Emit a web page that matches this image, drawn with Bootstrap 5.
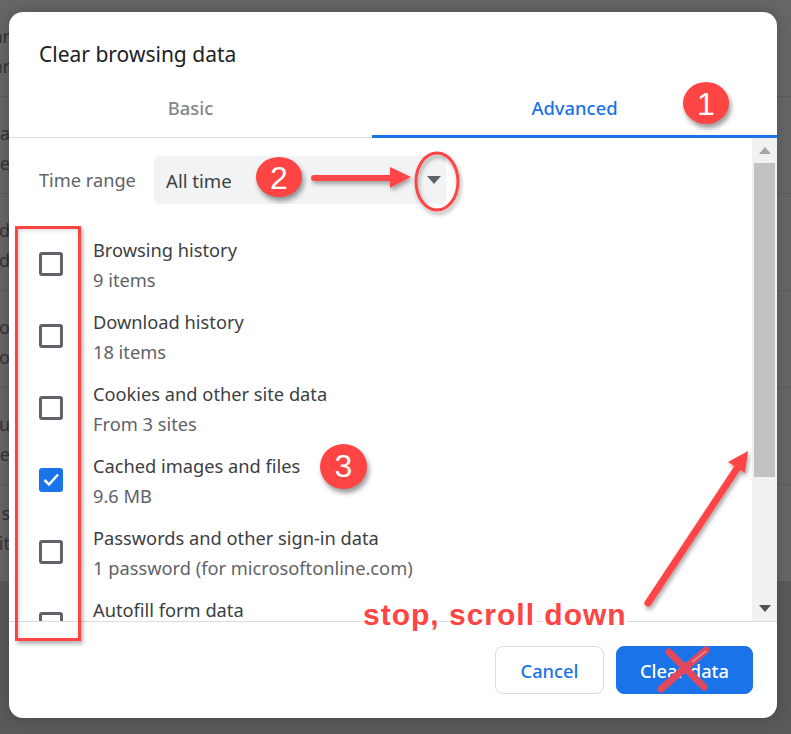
<!DOCTYPE html>
<html lang="en">
<head>
<meta charset="utf-8">
<title>Clear browsing data</title>
<link href="https://cdn.jsdelivr.net/npm/bootstrap@5.3.0/dist/css/bootstrap.min.css" rel="stylesheet">
<style>
html,body{height:734px;overflow:hidden}
body{background:#595959;font-family:"Noto Sans","Open Sans",sans-serif;color:#202124;position:relative}
.backdrop{position:absolute;left:0;top:0;width:791px;background:#666}
.bgrow{height:97px;border-bottom:1px solid #5c5c5c;padding-top:21px;font-size:18px;line-height:30px;color:#333}
.bgrow.lastrow{padding-top:13px;height:96px;border-bottom:0}
.bgtext{width:10px;text-align:right;direction:rtl;overflow:hidden;white-space:nowrap}
.stage{padding:12px 14px 16px 9px;height:734px;position:relative}
.dlg{width:768px;height:706px;background:#fff;border-radius:14px;overflow:hidden;box-shadow:0 0 14px rgba(0,0,0,.22)}
.dlg-title{font-size:21px;line-height:28px;padding:28px 30px 0;height:68px;margin:0;font-weight:400}
.tabbar{height:58px;border-bottom:1px solid #dadce0}
.tabitem{flex:1 1 0;text-align:center;font-size:18.4px;font-weight:500;color:#80868b;padding-top:15px;line-height:26px}
.tabitem.on{color:#1a73e8;flex:0 0 405px;border-bottom:3px solid #1a73e8;margin-bottom:-1px;height:58px}
.scrollwrap{height:483px}
.scrollmain{flex:1 1 auto;overflow:hidden;min-width:0;padding:18px 0 0 30px}
.rangerow{height:48px}
.rangelabel{font-size:18.2px;color:#5f6368;width:115px;padding-top:2px}
.rangebox{width:292px;height:48px;background:#f1f3f4;border-radius:6px 0 0 6px;padding:2px 12px 0;font-size:18.6px;color:#3c4043}
.tri{width:0;height:0;border-left:7.5px solid transparent;border-right:7.5px solid transparent;border-top:8px solid #5f6368;margin-right:-7px;margin-top:-3px}
.rows{padding-top:24px}
.rowitem{height:72px}
.ckbox{width:24px;height:24px;border:3px solid #5f6368;border-radius:3px;flex:none;margin-right:30px;background:#fff}
.ckbox.on{background:#1a73e8;border-color:#1a73e8}
.ckbox svg{display:block}
.rowtext{padding-top:2px}
.rowmain{font-size:18.25px;line-height:30px;color:#3c4043}
.rowsub{font-size:18.25px;line-height:30px;color:#5f6368}
.rowlast{height:33px}
.rowlast .ckbox{margin-top:24px}
.rowlast .rowmain{line-height:22px;margin-top:11px}
.sbar{width:25px;flex:none;background:#f1f1f1;padding:0 2px}
.sbar-up,.sbar-down{height:25px}
.sbar-thumb{height:314px;background:#c1c1c1}
.sbar-fill{flex:1 1 auto}
.dlg-foot{height:97px;border-top:1px solid #dadce0;padding:24px 24px 0 0}
.btn-cancel,.btn-clear{height:48px;font-size:18.25px;font-weight:500;border-radius:8px;padding:1px 0 0;line-height:46px}
.btn-cancel{width:109px;background:#fff;color:#1a73e8;border:1px solid #dadce0}
.btn-clear{width:137px;background:#1a73e8;color:#fff;border:1px solid #1a73e8}
.annot{position:absolute;left:0;top:0;width:791px;height:734px;pointer-events:none}
.annot-text{position:absolute;left:363px;top:597px;font-family:"Liberation Sans",sans-serif;font-weight:700;font-size:30px;line-height:36px;color:#ff4444;letter-spacing:1px;white-space:nowrap;text-shadow:2px 0 1px #fff,-2px 0 1px #fff,0 2px 1px #fff,0 -2px 1px #fff,3px 3px 1px #fff,-3px 3px 1px #fff}
.numdot{position:absolute;border-radius:50%;background:#ff4444;color:#fff;font-family:"Liberation Sans",sans-serif;font-size:32px;text-align:center;box-shadow:2px 4px 5px rgba(0,0,0,.4)}
.n1{left:683px;top:82px;width:46px;height:42px;line-height:44px}
.n2{left:256px;top:157px;width:46px;height:40px;line-height:42px}
.n3{left:320px;top:444px;width:47px;height:45px;line-height:45px}
.redbox{position:absolute;left:15px;top:226px;width:66px;height:415px;border:3px solid #ff4444;box-shadow:2px 3px 4px rgba(0,0,0,.3),inset 1px 1px 4px rgba(0,0,0,.18)}
</style>
</head>
<body>
<div class="backdrop">
  <div class="bgrow"><div class="bgtext">ar</div><div class="bgtext">ar</div></div>
  <div class="bgrow"><div class="bgtext">a</div><div class="bgtext">ie</div></div>
  <div class="bgrow"><div class="bgtext">d</div><div class="bgtext">d</div></div>
  <div class="bgrow"><div class="bgtext">o</div><div class="bgtext">to</div></div>
  <div class="bgrow"><div class="bgtext">u</div><div class="bgtext">e</div></div>
  <div class="bgrow lastrow"><div class="bgtext">s</div><div class="bgtext">it</div></div>
</div>
<div class="stage">
<div class="dlg d-flex flex-column">
  <h1 class="dlg-title">Clear browsing data</h1>
  <div class="tabbar d-flex">
    <div class="tabitem">Basic</div>
    <div class="tabitem on">Advanced</div>
  </div>
  <div class="scrollwrap d-flex">
    <div class="scrollmain">
      <div class="rangerow d-flex align-items-center">
        <div class="rangelabel">Time range</div>
        <div class="rangebox d-flex align-items-center justify-content-between"><span>All time</span><span class="tri"></span></div>
      </div>
      <div class="rows">
        <div class="rowitem d-flex align-items-center"><div class="ckbox"></div><div class="rowtext"><div class="rowmain">Browsing history</div><div class="rowsub">9 items</div></div></div>
        <div class="rowitem d-flex align-items-center"><div class="ckbox"></div><div class="rowtext"><div class="rowmain">Download history</div><div class="rowsub">18 items</div></div></div>
        <div class="rowitem d-flex align-items-center"><div class="ckbox"></div><div class="rowtext"><div class="rowmain">Cookies and other site data</div><div class="rowsub">From 3 sites</div></div></div>
        <div class="rowitem d-flex align-items-center"><div class="ckbox on"><svg width="18" height="18" viewBox="0 0 18 18"><path d="M2.5 9l4.5 4.5 9-10" fill="none" stroke="#fff" stroke-width="2.5"/></svg></div><div class="rowtext"><div class="rowmain">Cached images and files</div><div class="rowsub">9.6 MB</div></div></div>
        <div class="rowitem d-flex align-items-center"><div class="ckbox"></div><div class="rowtext"><div class="rowmain">Passwords and other sign-in data</div><div class="rowsub">1 password (for microsoftonline.com)</div></div></div>
        <div class="rowlast d-flex align-items-start"><div class="ckbox"></div><div class="rowmain">Autofill form data</div></div>
      </div>
    </div>
    <div class="sbar d-flex flex-column">
      <div class="sbar-up d-flex align-items-center justify-content-center"><svg width="12" height="7" viewBox="0 0 12 7"><path d="M6 0L12 7H0z" fill="#a3a3a3"/></svg></div>
      <div class="sbar-thumb"></div>
      <div class="sbar-fill"></div>
      <div class="sbar-down d-flex align-items-center justify-content-center"><svg width="12" height="7" viewBox="0 0 12 7"><path d="M0 0H12L6 7z" fill="#505050"/></svg></div>
    </div>
  </div>
  <div class="dlg-foot d-flex justify-content-end gap-2">
    <button class="btn btn-cancel me-1" type="button">Cancel</button>
    <button class="btn btn-clear" type="button">Clear data</button>
  </div>
</div>
</div>
<div class="redbox"></div>
<svg class="annot" viewBox="0 0 791 734">
  <defs><filter id="sh" x="-30%" y="-30%" width="160%" height="160%"><feDropShadow dx="1.5" dy="3" stdDeviation="2" flood-color="#000" flood-opacity=".35"/></filter></defs>
  <g filter="url(#sh)">
    <path d="M314 178H395" stroke="#ff4444" stroke-width="6" stroke-linecap="round"/>
    <path d="M390 167L411 177L390 188z" fill="#ff4444"/>
    <ellipse cx="437" cy="181.5" rx="21" ry="28.5" fill="none" stroke="#ff4444" stroke-width="3"/>
    <path d="M648 603L738 467" stroke="#ff4444" stroke-width="7" stroke-linecap="round"/>
    <path d="M728 462L748 451L745 473z" fill="#ff4444"/>
  </g>
  <path d="M669 652L704 687M706 650L661 689" stroke="#e0485c" stroke-width="7" stroke-linecap="round"/>
  <path d="M692 662L706 651" stroke="#ee8f9c" stroke-width="1.5"/>
</svg>
<div class="numdot n1">1</div>
<div class="numdot n2">2</div>
<div class="numdot n3">3</div>
<div class="annot-text">stop, scroll down</div>
</body>
</html>
